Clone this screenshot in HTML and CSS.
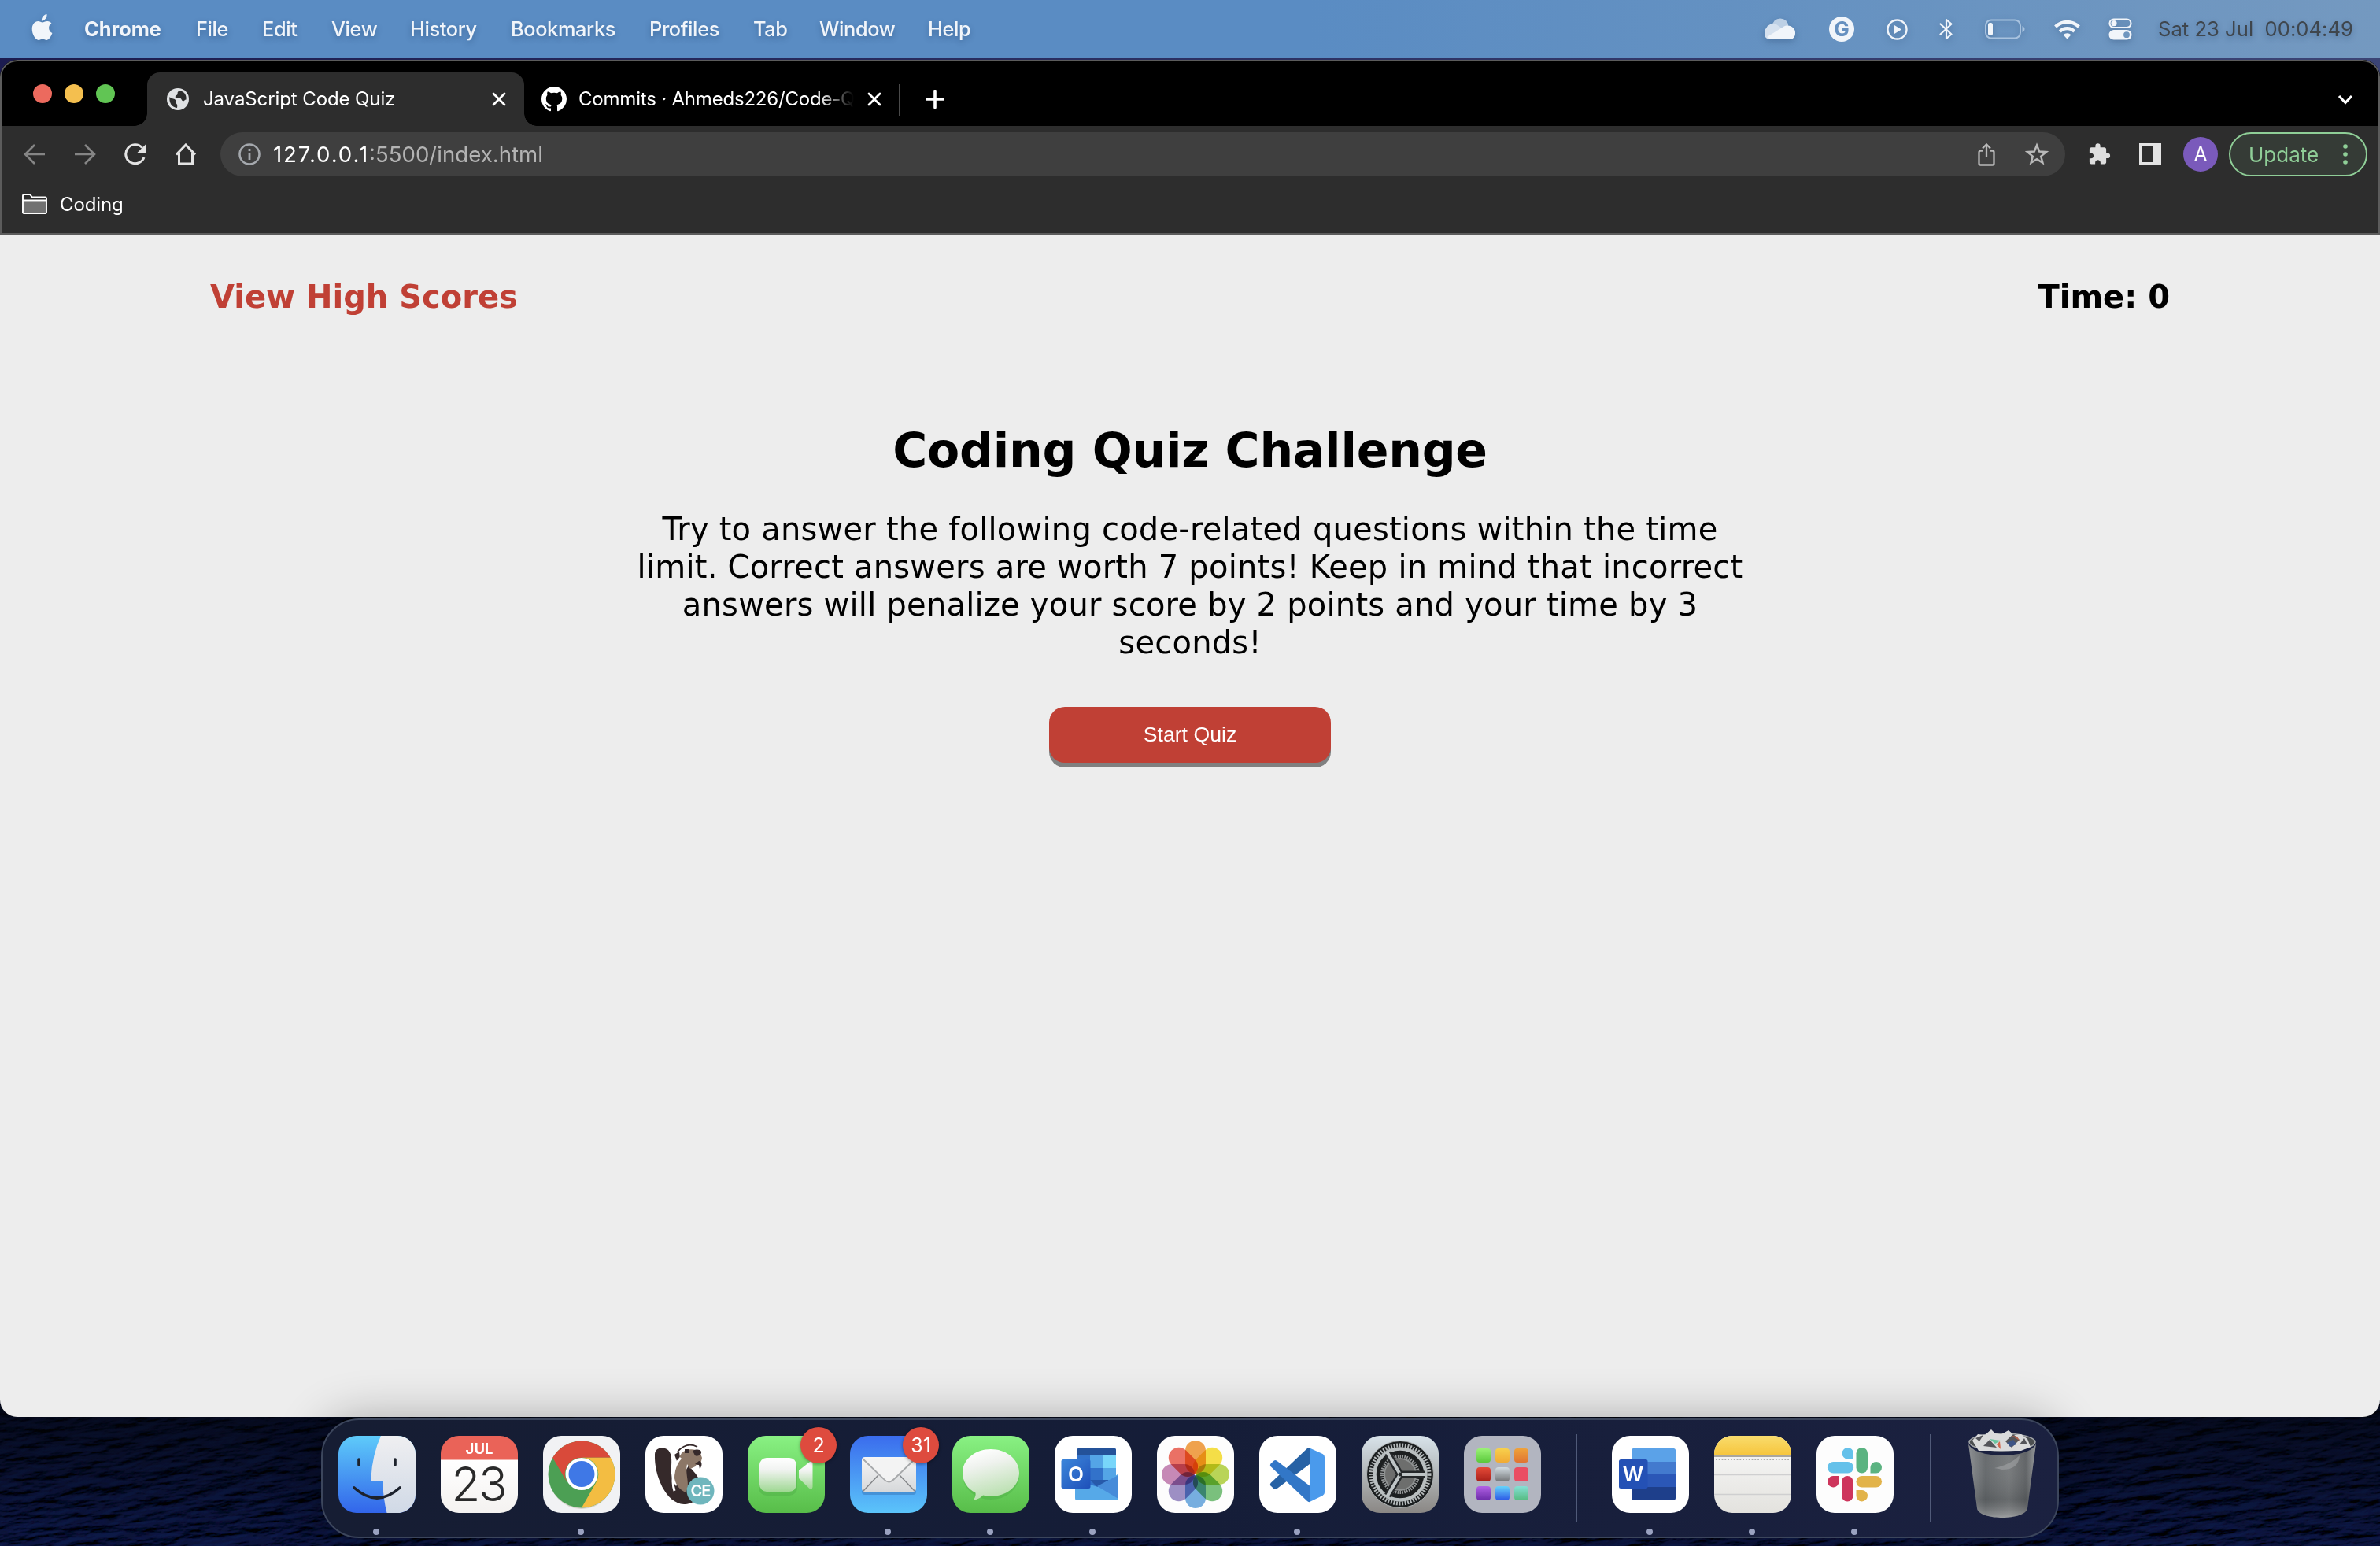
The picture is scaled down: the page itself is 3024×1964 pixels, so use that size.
FILE: index.html
```html
<!DOCTYPE html>
<html lang="en">
<head>
<meta charset="utf-8">
<title>JavaScript Code Quiz</title>
<link rel="stylesheet" href="styles.css">
</head>
<body>
<div class="desktop">
  <svg class="sea" width="3024" height="180" aria-hidden="true">
    <defs>
      <filter id="waves" x="0" y="0" width="100%" height="100%">
        <feTurbulence type="fractalNoise" baseFrequency="0.022 0.085" numOctaves="5" seed="8" result="n"/>
        <feDiffuseLighting in="n" surfaceScale="5" diffuseConstant="0.6" lighting-color="#132868">
          <feDistantLight azimuth="250" elevation="32"/>
        </feDiffuseLighting>
      </filter>
      <linearGradient id="seaShade" x1="0" y1="0" x2="0" y2="1">
        <stop offset="0" stop-color="#02040a" stop-opacity=".7"/>
        <stop offset="1" stop-color="#02040a" stop-opacity=".05"/>
      </linearGradient>
    </defs>
    <g transform="rotate(-6 1512 90)"><rect x="-100" y="-220" width="3224" height="620" filter="url(#waves)"/></g>
    <rect width="3024" height="180" fill="url(#seaShade)"/>
  </svg>

  <header class="menubar">
    <nav class="menus">
      <svg class="apple" width="28" height="34" viewBox="0 0 28 34"><path fill="#f1f5fa" d="M19.500 0c.4 2.600-.7 4.700-1.800 6.100-1.200 1.500-3 2.500-4.800 2.400-.3-2.400.8-4.600 1.900-5.900C16.100 1.200 18 .2 19.500 0zM25.400 11.800c-2.300 1.500-3.400 3.400-3.300 6 .1 3 1.700 5 4.300 6.200-1.400 4-4.100 8.700-7 8.900-2 .1-2.700-1.200-5.200-1.200s-3.300 1.200-5.200 1.200C5.200 33 .5 25.400.7 18.500.9 12.500 4.400 9.100 8.300 9c2.200 0 4.300 1.500 5.700 1.500 1.300 0 3.600-1.700 6.400-1.500 2 .1 3.800 1 5 2.800z"/></svg>
      <b>Chrome</b><span>File</span><span>Edit</span><span>View</span><span>History</span><span>Bookmarks</span><span>Profiles</span><span>Tab</span><span>Window</span><span>Help</span>
    </nav>
    <div class="status">
      <svg width="40" height="28" viewBox="0 0 40 28"><circle cx="20" cy="11" r="10.500" fill="#bdd0e5"/><path d="M7 27a8 8 0 0 1-5-14 10 10 0 0 1 13-5l17 12-6 7z" fill="#d5e1ef"/><path d="M3 24l21-13c7-4 16 1 15 9a7 7 0 0 1-6 7H8z" fill="#f1f5fa"/></svg>
      <span class="g-badge">G</span>
      <svg width="27" height="27" viewBox="0 0 27 27"><circle cx="13.500" cy="13.500" r="12" fill="none" stroke="#f1f5fa" stroke-width="2.400"/><path d="M10 8l9 5.500-9 5.500z" fill="#f1f5fa"/></svg>
      <svg width="18" height="28" viewBox="0 0 18 28"><path d="M1.500 7.500l14 13L9 26V2l6.500 5.500-14 13" fill="none" stroke="#f1f5fa" stroke-width="2.200" stroke-linejoin="round" stroke-linecap="round"/></svg>
      <svg width="52" height="26" viewBox="0 0 52 26"><rect x="1" y="1.500" width="44" height="23" rx="7" fill="none" stroke="#a9c3df" stroke-width="2"/><rect x="4" y="5" width="6" height="16" rx="2.500" fill="#f1f5fa"/><path d="M47.500 9c4 1.500 4 6.500 0 8z" fill="#a9c3df"/></svg>
      <svg width="33" height="25" viewBox="0 0 33 25"><g fill="none" stroke="#f1f5fa" stroke-width="4.200"><path d="M1.600 9a21 21 0 0 1 29.800 0"/><path d="M7.300 15a13 13 0 0 1 18.400 0"/></g><path d="M16.500 24.500l-5-5.300a7.200 7.200 0 0 1 10 0z" fill="#f1f5fa"/></svg>
      <svg width="30" height="28" viewBox="0 0 30 28"><rect x="1.500" y="1.500" width="27" height="10.500" rx="5.200" fill="none" stroke="#f1f5fa" stroke-width="2.200"/><circle cx="7" cy="6.700" r="3.600" fill="#f1f5fa"/><rect x=".5" y="15" width="29" height="12.500" rx="6.200" fill="#f1f5fa"/><circle cx="23" cy="21.200" r="3.900" fill="#6f96bf"/></svg>
      <time class="clock">Sat 23 Jul&nbsp; 00:04:49</time>
    </div>
  </header>

  <section class="window">
    <div class="tabstrip">
      <div class="lights"><i class="red"></i><i class="amber"></i><i class="green"></i></div>
      <div class="tab active">
        <svg width="28" height="28" viewBox="0 0 28 28"><circle cx="14" cy="14" r="14" fill="#dfe1e3"/><path d="M3.500 11c2.500 3 5.500 2 7 3.500 1.800 2-.5 3.500 1.500 5 1.300 1 1.500 3 1 5.500C6 24.500 2.500 18 3.500 11zM16 3.500c-2 .5-2.800 2-2.300 3.500.5 1.700-3 2-3 4.200 0 1.600 3.300 1.200 5.600 1.400 2.700.3 2 3.400 4.200 3.700 1.700.2 2-1.800 4-1.900C25.500 8 21 3.500 16 3.500z" fill="#2d2d2d"/></svg>
        <span class="tab-title first">JavaScript Code Quiz</span>
        <svg width="18" height="18" viewBox="0 0 18 18"><path d="M2 2l14 14M16 2L2 16" stroke="#fff" stroke-width="2.800" stroke-linecap="round"/></svg>
      </div>
      <div class="tab">
        <svg width="32" height="32" viewBox="0 0 16 16"><path fill="#fff" d="M8 0C3.580 0 0 3.580 0 8c0 3.540 2.290 6.530 5.470 7.590.4.070.55-.17.55-.38 0-.19-.01-.82-.01-1.490-2.010.37-2.530-.49-2.690-.94-.09-.23-.48-.94-.82-1.130-.28-.15-.68-.52-.01-.53.63-.01 1.080.58 1.230.82.72 1.210 1.870.87 2.330.66.07-.52.28-.87.51-1.070-1.780-.2-3.640-.89-3.640-3.950 0-.87.31-1.590.82-2.150-.08-.2-.36-1.020.08-2.120 0 0 .67-.21 2.200.82.64-.18 1.320-.27 2-.27s1.360.09 2 .27c1.530-1.040 2.200-.82 2.200-.82.44 1.100.16 1.920.08 2.120.51.56.82 1.270.82 2.150 0 3.070-1.870 3.750-3.650 3.950.29.25.54.73.54 1.480 0 1.070-.01 1.930-.01 2.200 0 .21.15.46.55.38A8.010 8.010 0 0 0 16 8c0-4.420-3.580-8-8-8z"/></svg>
        <span class="tab-title second">Commits · Ahmeds226/Code-Q</span>
        <svg width="18" height="18" viewBox="0 0 18 18"><path d="M2 2l14 14M16 2L2 16" stroke="#fff" stroke-width="2.800" stroke-linecap="round"/></svg>
      </div>
      <i class="tab-rule"></i>
      <svg class="new-tab" width="24" height="24" viewBox="0 0 24 24"><path d="M12 1.500v21M1.500 12h21" stroke="#fff" stroke-width="3.600" stroke-linecap="round"/></svg>
      <svg class="chevron" width="20" height="13" viewBox="0 0 20 13"><path d="M2 2l8 8.500L18 2" fill="none" stroke="#fff" stroke-width="3.200"/></svg>
    </div>

    <div class="toolbar">
      <svg width="28" height="28" viewBox="0 0 28 28"><path d="M27 14H3M14 2L2 14l12 12" fill="none" stroke="#858585" stroke-width="2.600"/></svg>
      <svg width="28" height="28" viewBox="0 0 28 28"><path d="M1 14h24M14 2l12 12-12 12" fill="none" stroke="#858585" stroke-width="2.600"/></svg>
      <svg width="28" height="28" viewBox="0 0 28 28"><path d="M22.500 5.500A12 12 0 1 0 25 18" fill="none" stroke="#e3e3e3" stroke-width="3"/><path d="M27.500 1v12h-12z" fill="#e3e3e3"/></svg>
      <svg width="28" height="28" viewBox="0 0 28 28"><path d="M2 14.500L14 2l12 12.500M5.500 12v14h17V12" fill="none" stroke="#e3e3e3" stroke-width="3"/></svg>
      <div class="omnibox">
        <svg width="28" height="28" viewBox="0 0 28 28"><circle cx="14" cy="14" r="12.500" fill="none" stroke="#a4a8ad" stroke-width="2.600"/><path d="M14 12.500v8.500M14 7v3" stroke="#a4a8ad" stroke-width="2.800"/></svg>
        <span class="url"><em>127.0.0.1</em>:5500/index.html</span>
        <svg width="22" height="30" viewBox="0 0 22 30"><path d="M7 10.500H3.500A2 2 0 0 0 1.500 12.500v14a2 2 0 0 0 2 2h15a2 2 0 0 0 2-2v-14a2 2 0 0 0-2-2H15M11 19V2.500M6 7.500l5-5.200 5 5.200" fill="none" stroke="#b9b9b9" stroke-width="2.300"/></svg>
        <svg width="30" height="30" viewBox="0 0 30 30"><path d="M15 3.500l3.200 8 8.700.6-6.700 5.500 2.200 8.300L15 21.300l-7.400 4.600 2.200-8.300-6.700-5.500 8.700-.6z" fill="none" stroke="#b9b9b9" stroke-width="2.500"/></svg>
      </div>
      <svg width="28" height="30" viewBox="1.500 0 22 24"><path fill="#dedede" d="M20.500 11H19V7c0-1.100-.9-2-2-2h-4V3.500a2.500 2.500 0 0 0-5 0V5H4c-1.100 0-2 .9-2 2v3.800h1.500c1.500 0 2.700 1.200 2.700 2.700S5 16.200 3.500 16.200H2V20c0 1.100.9 2 2 2h3.800v-1.500c0-1.500 1.200-2.700 2.700-2.700s2.700 1.200 2.700 2.700V22H17c1.100 0 2-.9 2-2v-4h1.500a2.500 2.500 0 0 0 0-5z"/></svg>
      <svg width="28" height="28" viewBox="0 0 28 28"><path fill="#e3e3e3" fill-rule="evenodd" d="M0 0h28v28H0zM4 4v20h14V4z"/></svg>
      <span class="avatar">A</span>
      <div class="update"><span>Update</span><svg width="6" height="26" viewBox="0 0 6 26" fill="#8fce97"><circle cx="3" cy="3" r="2.800"/><circle cx="3" cy="13" r="2.800"/><circle cx="3" cy="23" r="2.800"/></svg></div>
    </div>

    <div class="bookmarks">
      <svg width="32" height="26" viewBox="0 0 32 26"><path d="M1 23V2.500A1.500 1.500 0 0 1 2.500 1H10l3 3.500h16.500A1.500 1.500 0 0 1 31 6v17.500a1.500 1.500 0 0 1-1.500 1.500h-27A1.500 1.500 0 0 1 1 23z" fill="#2d2d2d" stroke="#fff" stroke-width="1.900"/><path d="M2 9h28v15H2z" fill="#717171"/><path d="M1 8.500h30" stroke="#fff" stroke-width="1.900"/></svg>
      <span>Coding</span>
    </div>

    <main class="page">
      <div class="page-head"><a class="scores">View High Scores</a><span class="timer">Time: 0</span></div>
      <h1>Coding Quiz Challenge</h1>
      <p>Try to answer the following code-related questions within the time<br>limit. Correct answers are worth 7 points! Keep in mind that incorrect<br>answers will penalize your score by 2 points and your time by 3<br>seconds!</p>
      <button class="start">Start Quiz</button>
    </main>
  </section>

  <footer class="dock">
    <div class="app running">
      <svg viewBox="0 0 98 98"><defs><linearGradient id="fb" x1="0" y1="0" x2="0" y2="1"><stop offset="0" stop-color="#5ecbfa"/><stop offset="1" stop-color="#3265ea"/></linearGradient><linearGradient id="fw" x1="0" y1="0" x2="0" y2="1"><stop offset="0" stop-color="#efeff1"/><stop offset="1" stop-color="#d0d9e6"/></linearGradient></defs>
      <rect width="98" height="98" rx="23" fill="url(#fb)"/><path d="M54 0h21a23 23 0 0 1 23 23v52a23 23 0 0 1-23 23H61.500Q57 80 56 57.500H43.500Q41 57.500 41.500 53 43 24 54 0z" fill="url(#fw)"/><path d="M26 30v7M72 30v7M20 66q29 26 58 0" fill="none" stroke="#1d222c" stroke-width="3.600" stroke-linecap="round"/></svg>
    </div>
    <div class="app calendar"><b>JUL</b><span>23</span></div>
    <div class="app running">
      <svg viewBox="0 0 98 98"><rect width="98" height="98" rx="23" fill="#f1f2f4"/><ellipse cx="49" cy="52" rx="41" ry="41" fill="#c5c0b4" opacity=".6"/><circle cx="49" cy="49" r="42.500" fill="#4c9f54"/><path d="M12.200 27.800A42.500 42.500 0 0 1 85.800 27.800H49A21 21 0 0 0 30.800 59.500z" fill="#d94a3a"/><path d="M85.800 27.800A42.500 42.500 0 0 1 49 91.500L67.200 59.500A21 21 0 0 0 49 27.800z" fill="#f3bd42"/><circle cx="49" cy="48.500" r="20.500" fill="#fff"/><circle cx="49" cy="48.500" r="16.500" fill="#3f78e6"/></svg>
    </div>
    <div class="app">
      <svg viewBox="0 0 98 98"><rect width="98" height="98" rx="23" fill="#fff"/><path d="M12 24C12 16 20 14 25 16c7 2 9 10 8 22-1 14 2 20 6 26l16-26c6 8 16 14 15 30 0 12-10 19-21 19C26 86 11 50 12 24z" fill="#35292a"/><path d="M41 20C50 10 58 10 66 14" fill="none" stroke="#35292a" stroke-width="1.800"/><path d="M37 24l6-4 1 8-4 4z" fill="#35292a"/><path d="M46 22c5-6 16-6 23-2l3 8-2 8-13 6-4-6c-3 14 5 26-2 36-7-4-12-8-14-18 0-12 3-22 9-32z" fill="#8c7767"/><path d="M37 70c-5-16 0-34 8-42" fill="none" stroke="#fff" stroke-width="3"/><path d="M60 19c5-2 9-2 11 1 1 4-5 7-8 5zM68 32c4 0 5 6 1 10l-1-5-5-1zM50 17h5v5h-5z" fill="#35292a"/><path d="M64 37l4 0-1 6z" fill="#fff"/><circle cx="70" cy="70" r="17.500" fill="#6fb6bd"/></svg><span class="ce">CE</span>
    </div>
    <div class="app">
      <svg viewBox="0 0 98 98"><defs><linearGradient id="gr" x1="0" y1="0" x2="0" y2="1"><stop offset="0" stop-color="#89f183"/><stop offset="1" stop-color="#58bd49"/></linearGradient><linearGradient id="cam" x1="0" y1="0" x2="0" y2="1"><stop offset="0" stop-color="#fff"/><stop offset=".35" stop-color="#f1f3f1"/><stop offset="1" stop-color="#9fd893"/></linearGradient></defs><rect width="98" height="98" rx="23" fill="url(#gr)"/><rect x="14" y="31" width="49" height="45" rx="10" fill="#3c9636" opacity=".25"/><rect x="15" y="28" width="47" height="43" rx="9" fill="url(#cam)"/><path d="M65 44l14-11q3-2 3.500 1v31q-.5 4-4 2L65 54z" fill="url(#cam)"/></svg><span class="badge">2</span>
    </div>
    <div class="app running">
      <svg viewBox="0 0 98 98"><defs><linearGradient id="ml" x1="0" y1="0" x2="0" y2="1"><stop offset="0" stop-color="#3a6ced"/><stop offset="1" stop-color="#5bc4fa"/></linearGradient><linearGradient id="env" x1="0" y1="0" x2="0" y2="1"><stop offset="0" stop-color="#f6f6f6"/><stop offset="1" stop-color="#d6d8da"/></linearGradient></defs><rect width="98" height="98" rx="23" fill="url(#ml)"/><rect x="15" y="30" width="69" height="45" rx="4" fill="#23528f" opacity=".3"/><rect x="15" y="27" width="69" height="44" rx="4" fill="url(#env)"/><path d="M17 70l19-20M82 70L63 50" stroke="#85878a" stroke-width="1.500"/><path d="M16 29l27 26q6 7 13 0l27-26" fill="#f3f3f3" stroke="#a7a9ab" stroke-width="1.800"/></svg><span class="badge">31</span>
    </div>
    <div class="app running">
      <svg viewBox="0 0 98 98"><defs><linearGradient id="bub" x1=".3" y1="0" x2=".6" y2="1"><stop offset="0" stop-color="#fff"/><stop offset=".3" stop-color="#eff2ee"/><stop offset="1" stop-color="#b4dea9"/></linearGradient></defs><rect width="98" height="98" rx="23" fill="url(#gr)"/><ellipse cx="49" cy="50" rx="36" ry="31" fill="#3c9636" opacity=".25"/><path d="M49 17c20 0 36 13 36 30S69 77 49 77c-4 0-7-.5-10-1.400-3 3.500-8 6-13 6.400 3-3 4-6 3.500-9.500C19 67 13 58 13 47c0-17 16-30 36-30z" fill="url(#bub)"/></svg>
    </div>
    <div class="app running">
      <svg viewBox="0 0 98 98"><defs><linearGradient id="ob" x1="0" y1="0" x2="1" y2="1"><stop offset="0" stop-color="#3c86da"/><stop offset="1" stop-color="#1e4fb9"/></linearGradient></defs><rect width="98" height="98" rx="23" fill="#fff"/><path d="M28.500 18a2 2 0 0 1 2-2H76a2 2 0 0 1 2 2v48H28.500z" fill="#3272ca"/><path d="M28.500 18a2 2 0 0 1 2-2H76a2 2 0 0 1 2 2v7H28.500z" fill="#245299"/><path d="M45 25h17v16H45zM62 41h16v16H62z" fill="#54a5e6"/><path d="M62 25h16v16H62z" fill="#78d6fa"/><path d="M45 56h25L54 65z" fill="#2759aa"/><path d="M26 56l29 9 25-16q1 0 1 1v29a3 3 0 0 1-3 3H28q-2 0-2-3z" fill="#56a9e8"/><path d="M54 64l27 16V50z" fill="#468bd9"/><rect x="8.500" y="30" width="37" height="37" rx="2.500" fill="url(#ob)"/></svg><span class="letter">O</span>
    </div>
    <div class="app">
      <svg viewBox="0 0 98 98"><rect width="98" height="98" rx="23" fill="#fdfdfd"/><g class="petals"><rect x="36" y="6" width="26" height="42" rx="13" fill="#f0993a"/><rect x="36" y="6" width="26" height="42" rx="13" fill="#f5dd33" transform="rotate(45 49 49)"/><rect x="36" y="6" width="26" height="42" rx="13" fill="#b4d246" transform="rotate(90 49 49)"/><rect x="36" y="6" width="26" height="42" rx="13" fill="#6dbb70" transform="rotate(135 49 49)"/><rect x="36" y="6" width="26" height="42" rx="13" fill="#69a8de" transform="rotate(180 49 49)"/><rect x="36" y="6" width="26" height="42" rx="13" fill="#9384c0" transform="rotate(225 49 49)"/><rect x="36" y="6" width="26" height="42" rx="13" fill="#c27db0" transform="rotate(270 49 49)"/><rect x="36" y="6" width="26" height="42" rx="13" fill="#ea6355" transform="rotate(315 49 49)"/></g></svg>
    </div>
    <div class="app running">
      <svg viewBox="0 0 98 98"><rect width="98" height="98" rx="23" fill="#fff"/><path d="M64 15.500V36L22 67.500q-2 1-3.500-.3L14.500 63.500q-1.500-1.500 0-3.500L61 16q1.500-1.200 3-.5z" fill="#2762a5"/><path d="M64 84V63.500L22 31.500q-2-1-3.500.3L14.500 35.500q-1.500 1.500 0 3.500L61 83q1.500 1.500 3 1z" fill="#3277c7"/><path d="M64 15.500l16.500 7.500q2.500 1.200 2.500 4v45q0 2.800-2.500 4L64 84z" fill="#4a9aec"/></svg>
    </div>
    <div class="app">
      <svg viewBox="0 0 98 98"><defs><linearGradient id="sp" x1="0" y1="0" x2="0" y2="1"><stop offset="0" stop-color="#d8e3ea"/><stop offset="1" stop-color="#8a8784"/></linearGradient></defs><rect width="98" height="98" rx="23" fill="url(#sp)"/><circle cx="49" cy="49" r="42.500" fill="#1c1f20" stroke="#aeb3b4"/><circle cx="49" cy="49" r="37" fill="none" stroke="#b4b9ba" stroke-width="5" stroke-dasharray="1.900 1.700"/><circle cx="49" cy="49" r="32.500" fill="none" stroke="#b9bfc0" stroke-width="4.500"/><circle cx="49" cy="49" r="23" fill="none" stroke="#96999a" stroke-width="4" stroke-dasharray="1.600 1.300"/><circle cx="49" cy="49" r="20" fill="#6d6e6d" stroke="#8f9292" stroke-width="2"/><path d="M49 49h31M49 49L33 22M49 49L33 76" stroke="#25282a" stroke-width="9"/><path d="M49 49h32M49 49L32.500 21M49 49L32.500 77" stroke="#bfc5c6" stroke-width="4.200"/><circle cx="49" cy="49" r="2.500" fill="#25282a"/></svg>
    </div>
    <div class="app launchpad"><i></i><i></i><i></i><i></i><i></i><i></i><i></i><i></i><i></i></div>
    <i class="rule"></i>
    <div class="app running">
      <svg viewBox="0 0 98 98"><rect width="98" height="98" rx="23" fill="#fff"/><path d="M25 33V18.500a2.500 2.500 0 0 1 2.500-2.500h51a2.500 2.500 0 0 1 2.500 2.500V33z" fill="#5ba2e8"/><path d="M25 33h56v16H25z" fill="#437ace"/><path d="M25 49h56v16H25z" fill="#2b57b7"/><path d="M25 65h56v14a2.500 2.500 0 0 1-2.500 2.500h-51A2.500 2.500 0 0 1 25 79z" fill="#1e3f8b"/><rect x="9" y="30" width="36.500" height="37" rx="2.500" fill="#2451b5"/></svg><span class="letter word">W</span>
    </div>
    <div class="app running">
      <svg viewBox="0 0 98 98"><defs><linearGradient id="nt" x1="0" y1="0" x2="0" y2="1"><stop offset="0" stop-color="#f9dc6d"/><stop offset="1" stop-color="#f6c53c"/></linearGradient><linearGradient id="np" x1="0" y1="0" x2="0" y2="1"><stop offset="0" stop-color="#fafafa"/><stop offset="1" stop-color="#e3e2de"/></linearGradient></defs><rect width="98" height="98" rx="23" fill="url(#np)"/><path d="M0 25v-2A23 23 0 0 1 23 0h52a23 23 0 0 1 23 23v2z" fill="url(#nt)"/><path d="M0 26h98" stroke="#a8a69f" stroke-width="2.200"/><path d="M2 30h94" stroke="#aaa" stroke-width="1.800" stroke-dasharray="1.800 2"/><path d="M0 49.500h98M0 74.500h98" stroke="#cfcfd0" stroke-width="1.600"/></svg>
    </div>
    <div class="app running">
      <svg viewBox="0 0 98 98"><rect width="98" height="98" rx="23" fill="#fdfdfd"/><g fill="#65c1ea"><path d="M47 29.500h-7.500A7.250 7.250 0 1 1 47 22z"/><rect x="14" y="33" width="33" height="14.500" rx="7.250"/></g><g fill="#5bb381"><rect x="50.500" y="15" width="14.500" height="32.500" rx="7.250"/><path d="M68.500 47.500V40A7.250 7.250 0 1 1 76 47.500z"/></g><g fill="#ce355c"><path d="M28.500 51v7.500A7.250 7.250 0 1 1 21 51z"/><rect x="32" y="51" width="14.500" height="32.500" rx="7.250"/></g><g fill="#e2b34a"><rect x="50.500" y="51" width="32.500" height="14.500" rx="7.250"/><path d="M50.500 69H58A7.250 7.250 0 1 1 50.500 76.500z"/></g></svg>
    </div>
    <i class="rule second"></i>
    <svg class="trash" width="88" height="114" viewBox="0 0 88 114"><defs><linearGradient id="tr" x1="0" y1="0" x2="1" y2="0"><stop offset="0" stop-color="#8a8d90"/><stop offset=".25" stop-color="#63676a"/><stop offset=".6" stop-color="#76797b"/><stop offset=".85" stop-color="#5d6063"/><stop offset="1" stop-color="#939698"/></linearGradient><linearGradient id="tb" x1="0" y1="0" x2="0" y2="1"><stop offset="0" stop-color="#fff" stop-opacity="0"/><stop offset=".75" stop-color="#303436" stop-opacity=".2"/><stop offset="1" stop-color="#ddd" stop-opacity=".4"/></linearGradient></defs><ellipse cx="44" cy="17" rx="42" ry="11" fill="#4c4f51" stroke="#a4a7a9" stroke-width="1.500"/><path d="M6 15l7-8 9 1 8-7 5 5 8 1 9-5 7 6 9-1 8 6 4 10-12 5H14z" fill="#dadbdb"/><path d="M20 22l8-8 9 10zM48 16l10-9 8 7-10 10zM66 20l6-8 4 8zM10 12l10-4-5 8z" fill="#55565a"/><path d="M28 13l14 2-7 4z" fill="#6ac6a0"/><path d="M50 18l8-4 4 6-8 3z" fill="#3c5486"/><path d="M56 9l7 1 3 5z" fill="#b4614a"/><path d="M37 20l4-4 1 10z" fill="#d2694c"/><path d="M1 19c8 20 78 20 86 0L76 101c-2 16-62 16-64 0z" fill="url(#tr)"/><path d="M1 19c8 20 78 20 86 0L76 101c-2 16-62 16-64 0z" fill="url(#tb)"/><path d="M34 50q20-4 32-16-1 18-22 18z" fill="#a9acae" opacity=".5"/></svg>
  </footer>
</div>
</body>
</html>
```
FILE: styles.css
```css
*, *::before, *::after { box-sizing: border-box; }
body { margin: 0; }
svg { display: block; flex: none; }

.desktop {
  position: relative;
  width: 3024px;
  height: 1964px;
  overflow: hidden;
  display: flex;
  flex-direction: column;
  background: linear-gradient(90deg, #1c1c50, #3b4475);
  font-family: Inter, "Liberation Sans", sans-serif;
}
.sea { position: absolute; left: 0; bottom: 0; }

/* macOS menu bar */
.menubar {
  height: 74px;
  margin-bottom: 2px;
  display: flex;
  justify-content: space-between;
  background: linear-gradient(90deg, #5a8cc3 0%, #5a8cc3 55%, #6893c1 80%, #7499c0 100%);
  color: #f1f5fa;
  font-size: 25.3px;
  font-weight: 500;
  line-height: 74px;
  letter-spacing: -.35px;
  white-space: nowrap;
  text-shadow: 0 3px 7px rgba(20, 50, 90, .35);
}
.menubar svg { filter: drop-shadow(0 3px 4px rgba(20, 50, 90, .28)); }
.menus {
  display: grid;
  grid-template-columns: 67px 142px 84px 88px 100px 128px 176px 132px 84px 138px auto;
  align-items: center;
  padding-left: 40px;
}
.menus b { font-weight: 700; letter-spacing: 0; }
.apple { margin-top: -4px; }
.status {
  display: grid;
  grid-template-columns: 82px 73px 67px 58px 88px 69px 63px 250px;
  align-items: center;
  width: 782px;
}
.g-badge {
  width: 32px;
  height: 32px;
  border-radius: 50%;
  background: #f1f5fa;
  color: #6590c0;
  font-size: 26px;
  font-weight: 700;
  line-height: 32px;
  letter-spacing: 0;
  text-align: center;
  text-shadow: none;
}
.clock { color: #3f464d; font-weight: 400; font-size: 25.6px; letter-spacing: .02px; }

/* Browser window */
.window {
  position: relative;
  height: 1724px;
  display: flex;
  flex-direction: column;
  overflow: hidden;
  border-radius: 22px;
  background: #2d2d2d;
}
.window::after {
  content: "";
  position: absolute;
  inset: 0 0 auto;
  height: 222px;
  border: 2px solid #5c5c5c;
  border-bottom: 0;
  border-radius: 22px 22px 0 0;
  pointer-events: none;
}
.tabstrip {
  height: 84px;
  padding: 16px 34px 0 42px;
  display: flex;
  align-items: flex-start;
  background: #000;
}
.lights { display: flex; gap: 16px; margin: 15px 41px 0 0; }
.lights i { width: 24px; height: 24px; border-radius: 50%; }
.red { background: #ec6a5e; }
.amber { background: #f4bf4f; }
.green { background: #61c554; }
.tab {
  position: relative;
  width: 479px;
  height: 68px;
  display: flex;
  align-items: center;
  padding: 0 24px 0 22px;
  color: #fff;
}
.lights + .tab { padding-left: 25px; }
.tab.active { background: #2d2d2d; border-radius: 16px 16px 0 0; }
.tab.active::before,
.tab.active::after {
  content: "";
  position: absolute;
  bottom: 0;
  width: 16px;
  height: 16px;
}
.tab.active::before { left: -16px; background: radial-gradient(circle at 0 0, transparent 15.5px, #2d2d2d 16px); }
.tab.active::after { right: -16px; background: radial-gradient(circle at 100% 0, transparent 15.5px, #2d2d2d 16px); }
.tab-title {
  flex: none;
  overflow: hidden;
  font-size: 24px;
  line-height: 40px;
  letter-spacing: -.2px;
  white-space: nowrap;
}
.tab-title.first { width: 367px; margin-left: 18px; letter-spacing: -.1px; }
.tab-title.second {
  width: 352px;
  margin: 0 15px;
  -webkit-mask-image: linear-gradient(90deg, #000 305px, transparent 350px);
  mask-image: linear-gradient(90deg, #000 305px, transparent 350px);
}
.tab-rule { width: 2px; height: 40px; margin: 15px 32px 0 -3px; background: #4a4a4a; }
.new-tab { margin-top: 22px; }
.chevron { margin: 28px 0 0 auto; }

.toolbar {
  height: 72px;
  padding: 0 16px 0 30px;
  display: flex;
  align-items: center;
  gap: 36px;
}
.omnibox {
  flex: none;
  width: 2344px;
  height: 56px;
  margin: 0 -6px;
  padding: 0 21px 0 23px;
  display: flex;
  align-items: center;
  border-radius: 28px;
  background: #3f3f3f;
}
.url { flex: 1; margin-left: 16px; color: #b3b3b3; font-size: 27.6px; letter-spacing: 0; }
.url em { color: #fff; font-style: normal; letter-spacing: 1.9px; }
.omnibox svg + svg { margin-left: 38px; }
.avatar {
  flex: none;
  width: 44px;
  height: 44px;
  margin: 0 -22px 0 -8px;
  border-radius: 50%;
  background: #7a5abb;
  color: #fff;
  font-size: 24px;
  line-height: 44px;
  text-align: center;
}
.update {
  flex: none;
  width: 176px;
  height: 56px;
  padding: 0 23px 0 23px;
  display: flex;
  align-items: center;
  justify-content: space-between;
  border: 2px solid #8fce97;
  border-radius: 28px;
  background: #353b36;
  color: #8fce97;
  font-size: 26px;
}
.bookmarks {
  height: 66px;
  padding: 0 28px 10px;
  display: flex;
  align-items: center;
  gap: 16px;
  border-bottom: 2px solid #5c5c5c;
  color: #fff;
  font-size: 24px;
  letter-spacing: -.1px;
}

/* Quiz page */
.page {
  flex: 1;
  background: #ededed;
  color: #000;
  font-family: Verdana, "DejaVu Sans", sans-serif;
  font-size: 40px;
  line-height: 48px;
  text-align: center;
}
.page-head {
  display: flex;
  justify-content: space-between;
  padding: 55px 267px 0;
  font-weight: 700;
}
.scores { color: #c04035; }
.page h1 { margin: 132px 0 37px; font-size: 60px; line-height: 78px; letter-spacing: -.25px; }
.page p { margin: 0 0 58px; letter-spacing: .22px; white-space: nowrap; }
.start {
  width: 358px;
  height: 71px;
  padding: 0;
  border: 0;
  border-radius: 20px;
  background: #c04035;
  box-shadow: 0 6px 0 #808080;
  color: #fff;
  font: 26.67px "Liberation Sans", Arial, sans-serif;
  display: block;
  margin: 0 auto;
}

/* Dock */
.dock {
  position: absolute;
  left: 408px;
  top: 1802px;
  width: 2208px;
  height: 152px;
  padding: 20px 20px 0;
  display: flex;
  align-items: flex-start;
  gap: 32px;
  border: 2px solid #3c465c;
  border-radius: 48px;
  background: linear-gradient(90deg, #161d33, #151d38 50%, #1b2140);
  box-shadow: 0 0 60px rgba(0, 0, 0, .3);
}
.app { position: relative; flex: none; width: 98px; height: 98px; border-radius: 23px; }
.app > svg { width: 98px; height: 98px; }
.app.running::after {
  content: "";
  position: absolute;
  left: 44px;
  top: 118px;
  width: 8px;
  height: 8px;
  border-radius: 50%;
  background: #9aa2c0;
}
.calendar {
  overflow: hidden;
  background: linear-gradient(#ea6358 0 30px, #fff 31px, #f4f2f0);
  text-align: center;
}
.calendar b { display: block; color: #fff; font-size: 18.500px; line-height: 33px; }
.calendar span { display: block; margin-right: 2px; color: #2a2a2a; font-size: 60px; font-weight: 300; line-height: 56px; letter-spacing: -2px; }
.ce, .letter {
  position: absolute;
  color: #fff;
  font-weight: 600;
  text-align: center;
}
.ce { left: 52px; top: 52px; width: 36px; font-size: 20px; line-height: 36px; letter-spacing: -.8px; }
.letter { left: 9px; top: 30px; width: 36px; font-size: 26px; line-height: 37px; }
.badge {
  position: absolute;
  left: 67px;
  top: -11px;
  width: 46px;
  height: 46px;
  border-radius: 50%;
  background: #de4b3e;
  box-shadow: 0 1px 4px rgba(0, 0, 0, .4);
  color: #fff;
  font-size: 25px;
  line-height: 46px;
  text-align: center;
}
.petals rect { mix-blend-mode: multiply; opacity: .9; }
.launchpad {
  display: grid;
  grid-template-columns: repeat(3, 18px);
  grid-auto-rows: 18px;
  gap: 6px;
  place-content: center;
  background: #b2b5c0;
}
.launchpad i { border-radius: 4px; background: linear-gradient(#9bf277, #5ac93b); }
.launchpad i:nth-child(2) { background: linear-gradient(#f7d04d, #f1aa35); }
.launchpad i:nth-child(3) { background: linear-gradient(#eea23b, #e07433); }
.launchpad i:nth-child(4) { background: linear-gradient(#e64b38, #a8201a); }
.launchpad i:nth-child(5) { background: linear-gradient(#d3dde3, #737577); }
.launchpad i:nth-child(6) { background: #ea4d63; }
.launchpad i:nth-child(7) { background: linear-gradient(#b261e6, #6b2ba8); }
.launchpad i:nth-child(8) { background: linear-gradient(#66d3fb, #2b57e6); }
.launchpad i:nth-child(9) { background: linear-gradient(#85e0d5, #55bb80); }
.rule { width: 2px; height: 112px; margin: -2px 12px 0 12px; background: #505a78; }
.rule.second { margin: -2px 14px 0 14px; }
.trash { margin-top: -9px; }
```
